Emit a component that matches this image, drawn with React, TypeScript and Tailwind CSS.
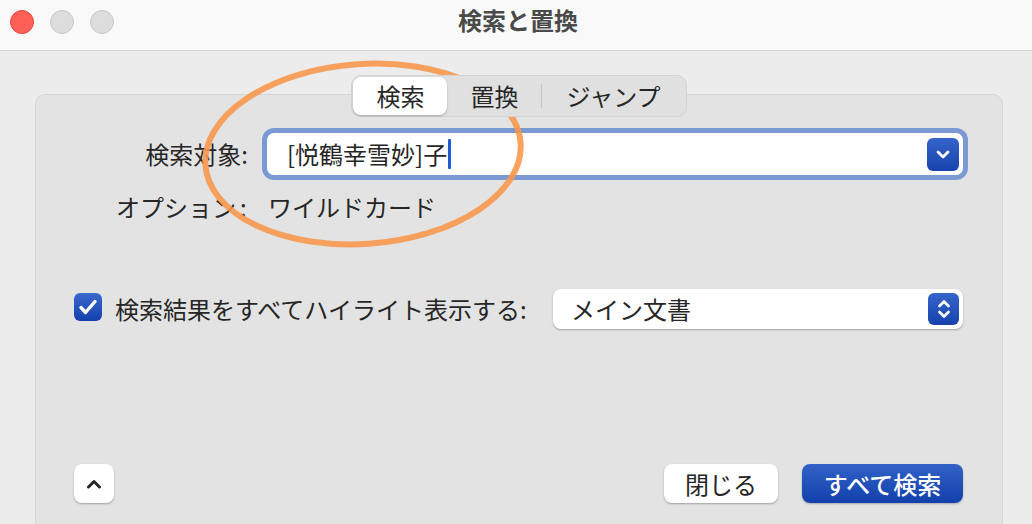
import React from 'react';

const ChevronDown = () => (
  <svg width="14" height="9" viewBox="0 0 14 9" fill="none">
    <path d="M2 2l5 5 5-5" stroke="white" strokeWidth="2.8" strokeLinecap="round" strokeLinejoin="round" />
  </svg>
);

const Stepper = () => (
  <svg width="14" height="22" viewBox="0 0 14 22" fill="none">
    <path d="M2.5 8l4.5-4.5 4.5 4.5" stroke="white" strokeWidth="2.6" strokeLinecap="round" strokeLinejoin="round" />
    <path d="M2.5 14l4.5 4.5 4.5-4.5" stroke="white" strokeWidth="2.6" strokeLinecap="round" strokeLinejoin="round" />
  </svg>
);

const Check = () => (
  <svg width="20" height="18" viewBox="0 0 20 18" fill="none">
    <path d="M3 9.5l4.5 5L17 3.5" stroke="white" strokeWidth="3.4" strokeLinecap="round" strokeLinejoin="round" />
  </svg>
);

const ChevronUp = () => (
  <svg width="16" height="10" viewBox="0 0 16 10" fill="none">
    <path d="M2.5 8l5.5-5.5 5.5 5.5" stroke="#262626" strokeWidth="3" strokeLinecap="round" strokeLinejoin="round" />
  </svg>
);

const App = () => {
  return (
    <div className="relative w-[1032px] h-[524px] overflow-hidden bg-[#ececec] text-[#262626] font-['Noto_Sans_CJK_JP','Noto_Sans',sans-serif]">
      {/* Title bar */}
      <div className="grid grid-cols-[1fr_auto_1fr] items-center h-[51px] bg-[#f9f9f9] border-b border-[#d4d4d4]">
        <div className="flex items-center gap-[16px] pl-[10px] -mt-[7px]">
          <div className="w-[24px] h-[24px] rounded-full bg-[#fe5f57] border border-[#e2463f]" />
          <div className="w-[24px] h-[24px] rounded-full bg-[#dddddd] border border-[#c6c6c6]" />
          <div className="w-[24px] h-[24px] rounded-full bg-[#dddddd] border border-[#c6c6c6]" />
        </div>
        <div className="text-[24px] font-semibold text-[#4a4a4a] leading-none -mt-[10px] pl-[4px]">検索と置換</div>
        <div />
      </div>

      {/* Body */}
      <div className="pl-[35px] pr-[29px] pt-[24px]">
        {/* Tabs */}
        <div className="relative z-10 flex justify-center">
          <div className="flex items-center h-[42px] bg-[#e0e0e0] border border-[#d3d3d3] rounded-[10px] px-[1px]">
            <div className="flex items-center h-[38px] px-[23px] bg-white rounded-[8px] shadow-[0_1px_2px_rgba(0,0,0,0.25)] text-[24px] leading-none">検索</div>
            <div className="flex items-center h-[38px] px-[23px] text-[24px] leading-none">置換</div>
            <div className="w-px h-[24px] bg-[#c4c4c4]" />
            <div className="flex items-center h-[38px] px-[24px] text-[24px] leading-none">ジャンプ</div>
          </div>
        </div>

        {/* Panel */}
        <div className="-mt-[23px] h-[470px] bg-[#e3e3e3] border border-[#d6d6d6] rounded-[10px] pl-[38px] pr-[39px] pt-[38px]">
          {/* Search row */}
          <div className="flex items-center">
            <div className="w-[174px] text-right text-[24px] leading-none">検索対象:</div>
            <div className="ml-[19px] flex-1 flex items-center justify-between h-[42px] bg-white rounded-[7px] shadow-[0_0_0_5px_#7b9ad3] pl-[20px] pr-[4px]">
              <div className="flex items-center text-[24px] leading-none">
                <span>[悦鶴幸雪妙]子</span>
                <span className="ml-[1px] w-[3px] h-[30px] bg-[#1f5bd6] rounded-[1px]" />
              </div>
              <div className="w-[32px] h-[33px] rounded-[6px] bg-gradient-to-b from-[#3564ca] to-[#1742ad] flex items-center justify-center">
                <ChevronDown />
              </div>
            </div>
          </div>

          {/* Options row */}
          <div className="flex items-center h-[30px] mt-[17px] ml-[42px] text-[24px] leading-none">
            <span className="w-[152px]">オプション<span className="ml-[4px]">:</span></span>
            <span>ワイルドカード</span>
          </div>

          {/* Highlight row */}
          <div className="flex items-center mt-[67px]">
            <div className="w-[28px] h-[28px] -mt-[4px] rounded-[6px] bg-gradient-to-b from-[#3a68cc] to-[#1540ad] flex items-center justify-center">
              <Check />
            </div>
            <div className="ml-[13px] text-[24px] leading-none">検索結果をすべてハイライト表示する:</div>
            <div className="ml-auto w-[410px] h-[40px] flex items-center justify-between bg-white rounded-[8px] shadow-[0_1px_2px_rgba(0,0,0,0.3)] pl-[18px] pr-[4px]">
              <span className="text-[24px] leading-none">メイン文書</span>
              <div className="w-[31px] h-[32px] rounded-[6px] bg-gradient-to-b from-[#3564ca] to-[#1742ad] flex items-center justify-center">
                <Stepper />
              </div>
            </div>
          </div>

          {/* Bottom buttons */}
          <div className="flex items-center justify-between mt-[135px]">
            <div className="w-[40px] h-[39px] bg-white rounded-[8px] shadow-[0_1px_2px_rgba(0,0,0,0.3)] flex items-center justify-center">
              <ChevronUp />
            </div>
            <div className="flex items-center gap-[24px]">
              <div className="w-[114px] h-[39px] bg-white rounded-[8px] shadow-[0_1px_2px_rgba(0,0,0,0.3)] flex items-center justify-center text-[24px] leading-none">閉じる</div>
              <div className="w-[161px] h-[39px] rounded-[8px] bg-gradient-to-b from-[#3262c8] to-[#1140ab] shadow-[0_1px_2px_rgba(0,0,0,0.25)] flex items-center justify-center text-[24px] leading-none text-white font-medium">すべて検索</div>
            </div>
          </div>
        </div>
      </div>

      {/* Annotation */}
      <svg className="absolute inset-0 pointer-events-none" width="1032" height="524">
        <ellipse cx="363" cy="154" rx="158" ry="90" transform="rotate(-4 363 154)" fill="none" stroke="#f9964a" strokeOpacity="0.88" strokeWidth="6" />
      </svg>
    </div>
  );
};

export default App;
